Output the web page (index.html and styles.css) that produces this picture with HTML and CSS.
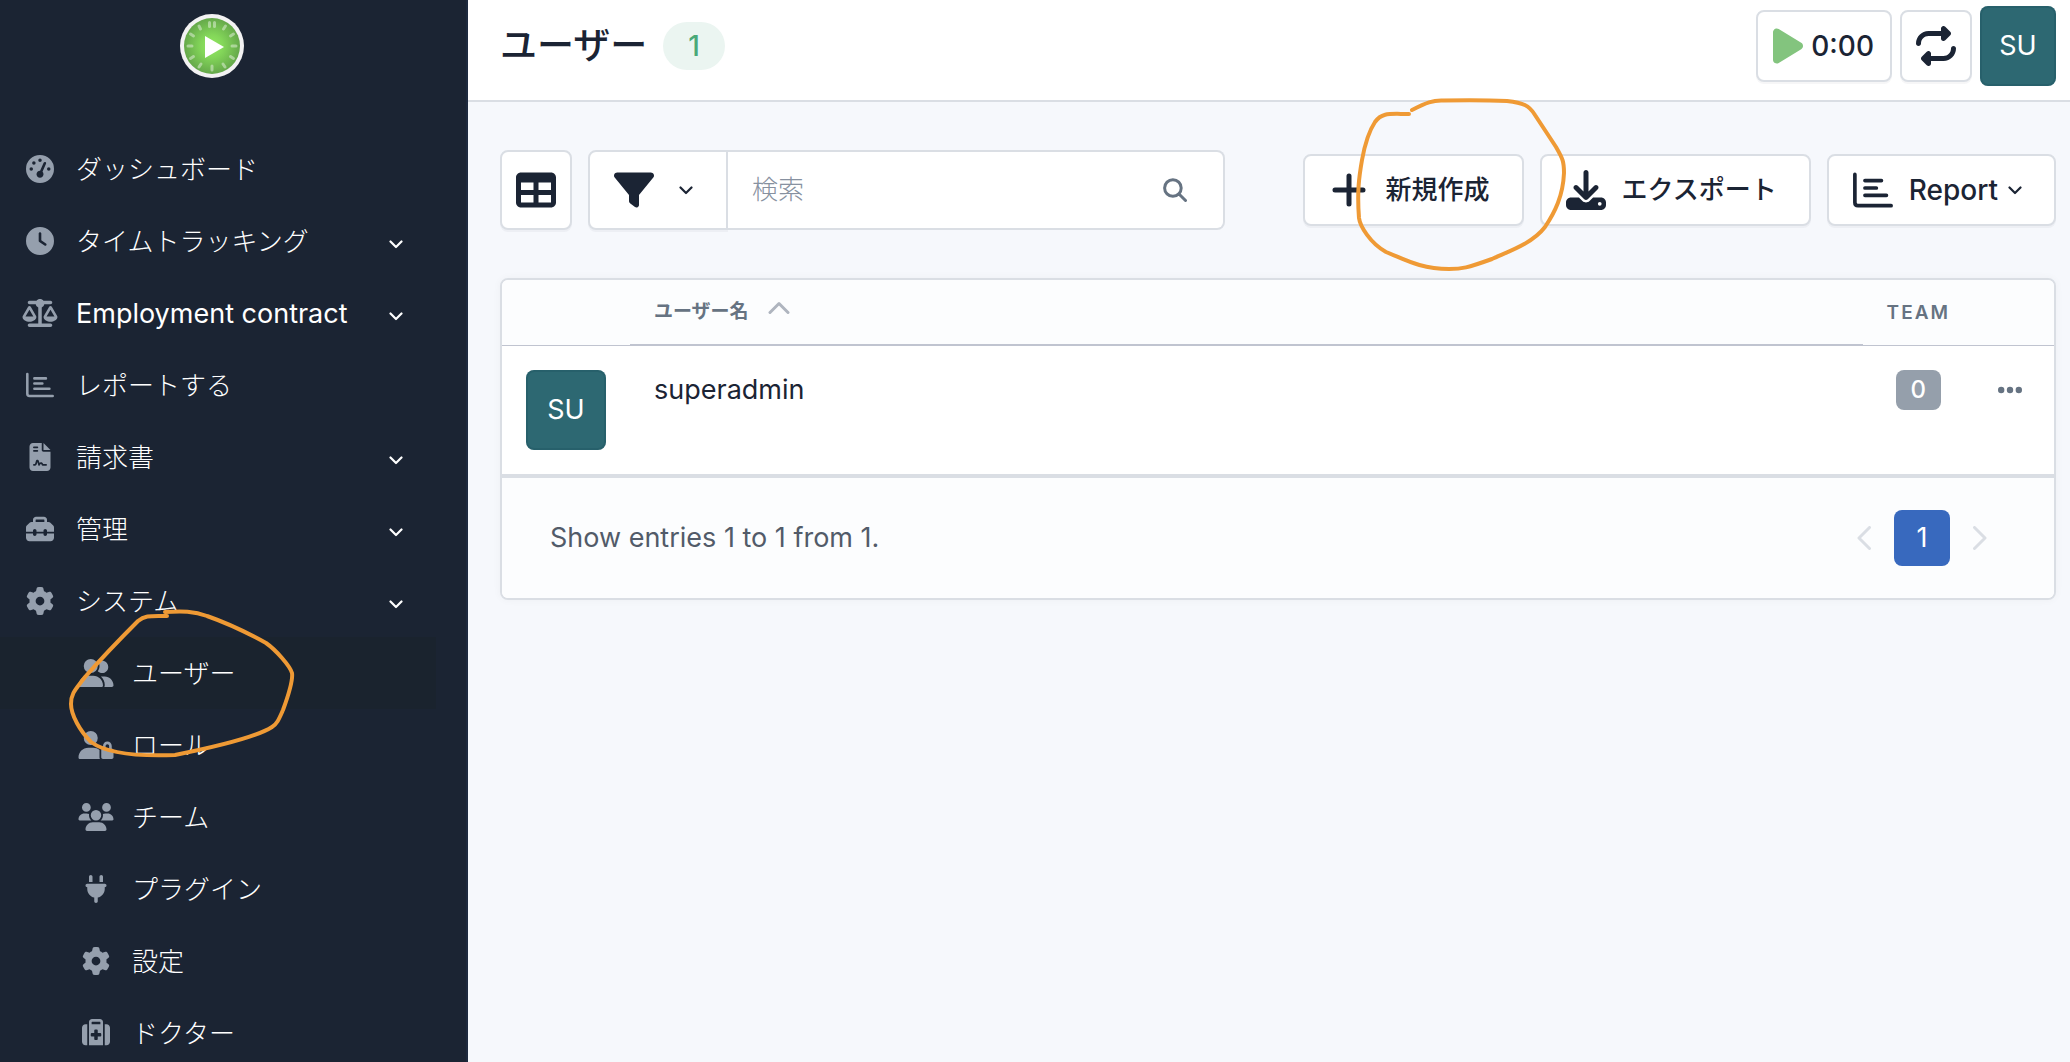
FILE: index.html
```html
<!DOCTYPE html>
<html lang="ja">
<head>
    <meta charset="UTF-8">
    <meta name="viewport" content="width=device-width, initial-scale=1">
    <title>ユーザー</title>
    <link rel="stylesheet" href="styles.css">
</head>
<body>
    <!-- shared icon shapes -->
    <svg class="sprite" aria-hidden="true">
        <symbol id="chevron" viewBox="0 0 14 9"><path d="M1.5 1.5 7 7l5.5-5.5" fill="none" stroke="currentColor" stroke-width="2.2" stroke-linecap="round" stroke-linejoin="round"/></symbol>
        <symbol id="gear" viewBox="0 0 512 512"><path d="M495.9 166.6c3.2 8.7 .5 18.4-6.4 24.6l-43.3 39.4c1.1 8.3 1.7 16.8 1.7 25.4s-.6 17.1-1.7 25.4l43.3 39.4c6.9 6.2 9.6 15.9 6.4 24.6c-4.4 11.9-9.7 23.3-15.8 34.3l-4.7 8.1c-6.6 11-14 21.4-22.1 31.2c-5.9 7.2-15.7 9.6-24.5 6.8l-55.7-17.7c-13.4 10.3-28.2 18.9-44 25.4l-12.5 57.1c-2 9.1-9 16.3-18.2 17.8c-13.8 2.3-28 3.5-42.5 3.5s-28.7-1.2-42.5-3.5c-9.2-1.5-16.2-8.7-18.2-17.8l-12.5-57.1c-15.8-6.5-30.6-15.1-44-25.4L83.1 425.9c-8.8 2.8-18.6 .3-24.5-6.8c-8.1-9.8-15.5-20.2-22.1-31.2l-4.7-8.1c-6.1-11-11.4-22.4-15.8-34.3c-3.2-8.7-.5-18.4 6.4-24.6l43.3-39.4C64.6 273.1 64 264.6 64 256s.6-17.1 1.7-25.4L22.4 191.2c-6.9-6.2-9.6-15.9-6.4-24.6c4.4-11.9 9.7-23.3 15.8-34.3l4.7-8.1c6.6-11 14-21.4 22.1-31.2c5.9-7.2 15.7-9.6 24.5-6.8l55.7 17.7c13.4-10.3 28.2-18.9 44-25.4l12.5-57.1c2-9.1 9-16.3 18.2-17.8C227.3 1.2 241.5 0 256 0s28.7 1.2 42.5 3.5c9.2 1.5 16.2 8.7 18.2 17.8l12.5 57.1c15.8 6.5 30.6 15.1 44 25.4l55.7-17.7c8.8-2.8 18.6-.3 24.5 6.8c8.1 9.8 15.5 20.2 22.1 31.2l4.7 8.1c6.1 11 11.4 22.4 15.8 34.3zM256 336a80 80 0 1 0 0-160 80 80 0 1 0 0 160z"/></symbol>
        <symbol id="report" viewBox="0 0 512 512"><path d="M24 56V417Q24 457 64 457H488M153 135H364M153 230H299M153 324H428" fill="none" stroke="currentColor" stroke-width="47" stroke-linecap="round"/></symbol>
    </svg>

    <aside class="sidebar">
        <a class="brand" href="#" aria-label="ダッシュボード">
            <svg viewBox="0 0 64 64" width="64" height="64">
                <defs>
                    <radialGradient id="dial">
                        <stop offset="0" stop-color="#93e861"/>
                        <stop offset="0.4" stop-color="#83d659"/>
                        <stop offset="1" stop-color="#65a84a"/>
                    </radialGradient>
                </defs>
                <circle cx="32" cy="32" r="32" fill="#f3f2f3"/>
                <circle cx="32" cy="32" r="28" fill="url(#dial)"/>
                <g stroke="#fff" stroke-opacity="0.42" stroke-width="3" stroke-linecap="round">
                    <path d="M29.500 8.500V12.500M34.500 8.500V12.500M32 52V56M8 32h4M52 32h4"/>
                    <path d="M43.500 15l2-3M50.500 22l3-2M50.500 42.500l3 2M43 50l2 3M21 50l-2 3M13.500 42.500l-3 2M13.500 22l-3-2M20.500 15l-1.500-3"/>
                </g>
                <path d="M25 22v22l19-11z" fill="#fff"/>
            </svg>
        </a>

        <nav>
            <ul class="menu">
                <li><a class="menu-link" href="#">
                    <svg class="menu-icon" viewBox="0 0 512 512"><path d="M0 256a256 256 0 1 1 512 0A256 256 0 1 1 0 256zM288 96a32 32 0 1 0 -64 0 32 32 0 1 0 64 0zM256 416c35.3 0 64-28.7 64-64c0-17.4-6.9-33.1-18.1-44.6L366 161.7c5.3-12.1-.2-26.3-12.3-31.6s-26.3 .2-31.600 12.300L257.9 288c-.6 0-1.300 0-1.900 0c-35.300 0-64 28.700-64 64s28.700 64 64 64zM176 144a32 32 0 1 0 -64 0 32 32 0 1 0 64 0zM96 288a32 32 0 1 0 0-64 32 32 0 1 0 0 64zm352-32a32 32 0 1 0 -64 0 32 32 0 1 0 64 0z"/></svg>
                    <span>ダッシュボード</span>
                </a></li>
                <li><a class="menu-link" href="#">
                    <svg class="menu-icon" viewBox="0 0 512 512"><path d="M256 0a256 256 0 1 1 0 512A256 256 0 1 1 256 0zM232 120V256c0 8 4 15.5 10.7 20l96 64c11 7.400 25.900 4.400 33.300-6.700s4.400-25.900-6.700-33.300L280 243.200V120c0-13.300-10.700-24-24-24s-24 10.700-24 24z"/></svg>
                    <span>タイムトラッキング</span>
                    <svg class="chevron"><use href="#chevron"/></svg>
                </a></li>
                <li><a class="menu-link" href="#">
                    <svg class="menu-icon" viewBox="0 0 640 512"><path d="M384 32H512c17.7 0 32 14.3 32 32s-14.3 32-32 32H398.4c-5.2 25.8-22.9 47.1-46.4 57.3V448H512c17.7 0 32 14.3 32 32s-14.3 32-32 32H320 128c-17.7 0-32-14.3-32-32s14.3-32 32-32H288V153.3c-23.5-10.3-41.2-31.6-46.4-57.3H128c-17.7 0-32-14.3-32-32s14.3-32 32-32H256c14.6-19.4 37.8-32 64-32s49.4 12.6 64 32zm55.6 288H584.4L512 195.8 439.6 320zM512 416c-62.9 0-115.2-34-126-78.9c-2.6-11 1-22.3 6.7-32.1l95.2-163.2c5-8.6 14.2-13.8 24.1-13.8s19.1 5.3 24.1 13.8l95.2 163.2c5.7 9.8 9.3 21.1 6.7 32.1C627.2 382 574.9 416 512 416zM126.8 195.8L54.4 320H199.3L126.8 195.8zM.9 337.1c-2.6-11 1-22.3 6.7-32.1l95.2-163.2c5-8.6 14.2-13.8 24.1-13.8s19.1 5.3 24.1 13.8l95.2 163.2c5.7 9.8 9.3 21.1 6.700 32.1C242 382 189.700 416 126.800 416S11.700 382 .9 337.100z"/></svg>
                    <span class="latin">Employment contract</span>
                    <svg class="chevron"><use href="#chevron"/></svg>
                </a></li>
                <li><a class="menu-link" href="#">
                    <svg class="menu-icon"><use href="#report"/></svg>
                    <span>レポートする</span>
                </a></li>
                <li><a class="menu-link" href="#">
                    <svg class="menu-icon" viewBox="0 0 384 512"><path d="M64 0C28.7 0 0 28.7 0 64V448c0 35.3 28.7 64 64 64H320c35.3 0 64-28.7 64-64V160H256c-17.7 0-32-14.3-32-32V0H64zM256 0V128H384L256 0zM80 64h64c8.8 0 16 7.2 16 16s-7.2 16-16 16H80c-8.8 0-16-7.2-16-16s7.2-16 16-16zm0 64h64c8.8 0 16 7.2 16 16s-7.2 16-16 16H80c-8.8 0-16-7.2-16-16s7.2-16 16-16zm54.2 253.8c-6.1 20.3-24.8 34.2-46 34.2H80c-8.8 0-16-7.2-16-16s7.2-16 16-16h8.2c7.1 0 13.3-4.6 15.3-11.4l14.9-49.5c3.4-11.3 13.8-19.1 25.6-19.1s22.2 7.7 25.6 19.1l11.6 38.6c7.4-6.2 16.8-9.7 26.8-9.7c15.9 0 30.4 9 37.5 23.2l4.4 8.8H304c8.8 0 16 7.2 16 16s-7.2 16-16 16H240c-6.1 0-11.6-3.4-14.3-8.8l-8.8-17.7c-1.7-3.4-5.1-5.5-8.8-5.5s-7.2 2.1-8.8 5.5l-8.8 17.7c-2.9 5.9-9.2 9.4-15.7 8.8s-12.1-5.1-13.9-11.3L144 349l-9.8 32.8z"/></svg>
                    <span>請求書</span>
                    <svg class="chevron"><use href="#chevron"/></svg>
                </a></li>
                <li><a class="menu-link" href="#">
                    <svg class="menu-icon" viewBox="0 0 512 512"><path d="M176 88v40H336V88c0-4.4-3.6-8-8-8H184c-4.4 0-8 3.6-8 8zm-48 40V88c0-30.9 25.1-56 56-56H328c30.9 0 56 25.1 56 56v40h28.1c12.7 0 24.9 5.1 33.9 14.1l51.9 51.9c9 9 14.1 21.2 14.1 33.9V304H384V288c0-17.7-14.3-32-32-32s-32 14.3-32 32v16H192V288c0-17.7-14.3-32-32-32s-32 14.3-32 32v16H0V227.9c0-12.7 5.1-24.9 14.1-33.9l51.9-51.9c9-9 21.2-14.1 33.9-14.1H128zM0 416V336H128v16c0 17.7 14.3 32 32 32s32-14.3 32-32V336H320v16c0 17.7 14.3 32 32 32s32-14.3 32-32V336H512v80c0 35.3-28.7 64-64 64H64c-35.3 0-64-28.700-64-64z"/></svg>
                    <span>管理</span>
                    <svg class="chevron"><use href="#chevron"/></svg>
                </a></li>
                <li>
                    <a class="menu-link" href="#">
                        <svg class="menu-icon"><use href="#gear"/></svg>
                        <span>システム</span>
                        <svg class="chevron"><use href="#chevron"/></svg>
                    </a>
                    <ul class="submenu">
                        <li class="active">
                            <a class="menu-link" href="#" aria-current="page">
                                <svg class="menu-icon" viewBox="0 0 640 512"><path d="M96 128a128 128 0 1 1 256 0A128 128 0 1 1 96 128zM0 482.3C0 383.8 79.8 304 178.3 304h91.4C368.2 304 448 383.8 448 482.3c0 16.4-13.3 29.7-29.7 29.7H29.7C13.3 512 0 498.7 0 482.3zM609.3 512H471.4c5.4-9.4 8.6-20.3 8.6-32v-8c0-60.7-27.1-115.2-69.8-151.8c2.4-.1 4.7-.2 7.1-.2h61.4C567.8 320 640 392.2 640 481.3c0 17-13.8 30.7-30.7 30.7zM432 256c-31 0-59-12.6-79.3-32.9C372.4 196.5 384 163.6 384 128c0-26.8-6.6-52.1-18.3-74.3C384.3 40.1 407.2 32 432 32c61.9 0 112 50.1 112 112s-50.1 112-112 112z"/></svg>
                                <span>ユーザー</span>
                            </a>
                            <svg class="scribble scribble-menu" viewBox="66 605 232 155" aria-hidden="true"><path d="M165 612C182 611 194 611 207 616C227 623 248 633 266 643C276 650 290 666 292 673C293 679 291 688 283 710C279 719 277 724 272 727C255 738 215 747 175 755C150 756 110 756 91 742C80 731 71 715 71 704C71 693 76 689 85 677C100 660 120 639 138 621C145 615 151 616 167 616"/></svg>
                        </li>
                        <li><a class="menu-link" href="#">
                            <svg class="menu-icon" viewBox="0 0 640 512"><path d="M224 256A128 128 0 1 0 224 0a128 128 0 1 0 0 256zm-45.7 48C79.8 304 0 383.8 0 482.3C0 498.7 13.3 512 29.7 512H392.6c-5.4-9.4-8.6-20.3-8.6-32V352c0-2.1 .1-4.2 .3-6.3c-31-26-71-41.7-114.6-41.7H178.3zM528 240c17.7 0 32 14.3 32 32v48H496V272c0-17.7 14.3-32 32-32zm-80 32v48c-17.7 0-32 14.3-32 32V480c0 17.7 14.3 32 32 32H608c17.7 0 32-14.3 32-32V352c0-17.7-14.3-32-32-32V272c0-44.2-35.8-80-80-80s-80 35.8-80 80z"/></svg>
                            <span>ロール</span>
                        </a></li>
                        <li><a class="menu-link" href="#">
                            <svg class="menu-icon" viewBox="0 0 640 512"><path d="M144 0a80 80 0 1 1 0 160A80 80 0 1 1 144 0zM512 0a80 80 0 1 1 0 160A80 80 0 1 1 512 0zM0 298.7C0 239.8 47.8 192 106.7 192h42.7c15.9 0 31 3.5 44.6 9.7c-1.3 7.2-1.9 14.7-1.9 22.3c0 38.2 16.8 72.5 43.3 96c-.2 0-.4 0-.7 0H21.3C9.6 320 0 310.4 0 298.7zM405.3 320c-.2 0-.4 0-.7 0c26.6-23.5 43.3-57.8 43.3-96c0-7.6-.7-15-1.9-22.3c13.6-6.3 28.7-9.7 44.6-9.7h42.7C592.2 192 640 239.8 640 298.7c0 11.8-9.6 21.3-21.3 21.3H405.3zM224 224a96 96 0 1 1 192 0 96 96 0 1 1 -192 0zM128 485.3C128 411.7 187.7 352 261.3 352H378.7C452.3 352 512 411.7 512 485.3c0 14.7-11.9 26.7-26.7 26.7H154.7c-14.7 0-26.7-11.9-26.7-26.7z"/></svg>
                            <span>チーム</span>
                        </a></li>
                        <li><a class="menu-link" href="#">
                            <svg class="menu-icon" viewBox="0 0 384 512"><path d="M96 0C78.3 0 64 14.3 64 32v96h64V32c0-17.7-14.3-32-32-32zM288 0c-17.7 0-32 14.3-32 32v96h64V32c0-17.7-14.3-32-32-32zM32 160c-17.7 0-32 14.3-32 32s14.3 32 32 32v32c0 77.4 55 142 128 156.8V480c0 17.7 14.3 32 32 32s32-14.3 32-32V412.8C297 398 352 333.4 352 256V224c17.7 0 32-14.3 32-32s-14.3-32-32-32H32z"/></svg>
                            <span>プラグイン</span>
                        </a></li>
                        <li><a class="menu-link" href="#">
                            <svg class="menu-icon"><use href="#gear"/></svg>
                            <span>設定</span>
                        </a></li>
                        <li><a class="menu-link" href="#">
                            <svg class="menu-icon" viewBox="0 0 512 512"><path d="M184 48H328c4.4 0 8 3.6 8 8V96H176V56c0-4.4 3.6-8 8-8zm-56 8V96v32V480H384V128 96 56c0-30.9-25.1-56-56-56H184c-30.9 0-56 25.1-56 56zM96 96H64C28.7 96 0 124.7 0 160V416c0 35.3 28.7 64 64 64H96V96zM416 480h32c35.3 0 64-28.7 64-64V160c0-35.3-28.7-64-64-64H416V480zM224 208c0-8.8 7.2-16 16-16h32c8.8 0 16 7.2 16 16v48h48c8.8 0 16 7.2 16 16v32c0 8.8-7.2 16-16 16H288v48c0 8.8-7.2 16-16 16H240c-8.8 0-16-7.2-16-16V320H176c-8.8 0-16-7.2-16-16V272c0-8.8 7.2-16 16-16h48V208z"/></svg>
                            <span>ドクター</span>
                        </a></li>
                    </ul>
                </li>
            </ul>
        </nav>
    </aside>

    <div class="page">
        <header class="page-header">
            <h1>ユーザー</h1>
            <span class="count">1</span>
            <div class="header-actions">
                <button type="button" class="btn btn-timer">
                    <svg class="play" viewBox="0 0 384 512"><path d="M73 39c-14.8-9.1-33.4-9.4-48.5-.9S0 62.6 0 80V432c0 17.4 9.4 33.4 24.5 41.9s33.7 8.1 48.5-.9L361 297c14.3-8.7 23-24.2 23-41s-8.7-32.2-23-41L73 39z"/></svg>
                    <span class="latin">0:00</span>
                </button>
                <button type="button" class="btn btn-square" aria-label="Restart">
                    <svg class="btn-icon" viewBox="0 0 512 512"><path d="M0 224c0 17.7 14.3 32 32 32s32-14.3 32-32c0-53 43-96 96-96H320v32c0 12.9 7.8 24.6 19.8 29.6s25.7 2.2 34.9-6.9l64-64c12.5-12.5 12.5-32.8 0-45.3l-64-64c-9.2-9.2-22.9-11.9-34.9-6.9S320 19.1 320 32V64H160C71.6 64 0 135.6 0 224zm512 64c0-17.7-14.3-32-32-32s-32 14.3-32 32c0 53-43 96-96 96H192V352c0-12.9-7.8-24.6-19.8-29.6s-25.7-2.2-34.9 6.9l-64 64c-12.5 12.5-12.5 32.8 0 45.3l64 64c9.2 9.2 22.9 11.9 34.9 6.9s19.8-16.6 19.8-29.6V448H352c88.4 0 160-71.6 160-160z"/></svg>
                </button>
                <a class="avatar avatar-header" href="#">SU</a>
            </div>
        </header>

        <main>
            <div class="toolbar">
                <div class="toolbar-search">
                    <button type="button" class="btn btn-square btn-tall" aria-label="Columns">
                        <svg class="btn-icon" viewBox="0 0 512 512"><path d="M64 256V160H224v96H64zm0 64H224v96H64V320zm224 96V320H448v96H288zM448 256H288V160H448v96zM64 32C28.7 32 0 60.7 0 96V416c0 35.3 28.7 64 64 64H448c35.3 0 64-28.7 64-64V96c0-35.3-28.7-64-64-64H64z"/></svg>
                    </button>
                    <form class="search">
                        <button type="button" class="btn btn-tall btn-filter" aria-label="Filter">
                            <svg class="btn-icon" viewBox="0 0 512 512"><path d="M3.9 54.9C10.5 40.9 24.5 32 40 32H472c15.5 0 29.5 8.9 36.1 22.9s4.6 30.5-5.2 42.5L320 320.9V448c0 12.1-6.8 23.2-17.7 28.6s-23.8 4.3-33.5-3l-64-48c-8.1-6-12.8-15.5-12.8-25.6V320.9L9 97.3C-.7 85.4-2.8 68.8 3.9 54.9z"/></svg>
                            <svg class="chevron"><use href="#chevron"/></svg>
                        </button>
                        <div class="search-field">
                            <input type="text" placeholder="検索" aria-label="検索">
                            <button type="submit" aria-label="Search">
                                <svg viewBox="0 0 24 24" width="24" height="24"><path d="M16.500 16.500 22.500 22.500M18.200 10A8.300 8.300 0 1 1 1.600 10A8.300 8.300 0 0 1 18.200 10Z" fill="none" stroke="currentColor" stroke-width="3" stroke-linecap="round"/></svg>
                            </button>
                        </div>
                    </form>
                </div>
                <div class="toolbar-actions">
                    <div class="create">
                        <a class="btn" href="#">
                            <svg class="btn-icon" viewBox="0 0 40 40"><path d="M20 6V34M6 20H34" fill="none" stroke="currentColor" stroke-width="5" stroke-linecap="round"/></svg>
                            <span>新規作成</span>
                        </a>
                        <svg class="scribble scribble-create" viewBox="1354 94 216 180" aria-hidden="true"><path d="M1413 110C1427 103 1434 100 1444 100.500C1470 100 1487 100 1508 101C1524 103 1530 105 1536 115L1557 147C1564 159 1565 162 1565 173C1564 196 1556 212 1546 227C1533 244 1508 252 1493 259C1468 268 1463 269 1450 269C1421 269 1405 259 1387 252C1371 243 1361 226 1360 218C1358 192 1360 177 1363 160C1367 138 1372 128 1376 122C1383 112 1391 114 1410 114"/></svg>
                    </div>
                    <a class="btn" href="#">
                        <svg class="btn-icon" viewBox="0 0 512 512"><path d="M288 32c0-17.7-14.3-32-32-32s-32 14.3-32 32V274.7l-73.4-73.4c-12.5-12.5-32.8-12.5-45.3 0s-12.5 32.8 0 45.3l128 128c12.5 12.5 32.8 12.5 45.3 0l128-128c12.5-12.5 12.5-32.8 0-45.3s-32.8-12.5-45.3 0L288 274.7V32zM64 352c-35.3 0-64 28.7-64 64v32c0 35.3 28.7 64 64 64H448c35.3 0 64-28.7 64-64V416c0-35.3-28.7-64-64-64H346.5l-45.3 45.3c-25 25-65.500 25-90.500 0L165.500 352H64zm368 56a24 24 0 1 1 0 48 24 24 0 1 1 0-48z"/></svg>
                        <span>エクスポート</span>
                    </a>
                    <button type="button" class="btn">
                        <svg class="btn-icon"><use href="#report"/></svg>
                        <span class="latin with-chevron">Report <svg class="chevron"><use href="#chevron"/></svg></span>
                    </button>
                </div>
            </div>

            <section class="card">
                <table>
                    <thead>
                        <tr>
                            <th class="col-avatar"></th>
                            <th class="col-name sorted" aria-sort="ascending">
                                <a href="#">ユーザー名
                                    <svg viewBox="0 0 22 14" width="22" height="14"><path d="M2 11.500 11 2.500l9 9" fill="none" stroke="currentColor" stroke-width="3" stroke-linecap="round" stroke-linejoin="round"/></svg>
                                </a>
                            </th>
                            <th class="col-team">TEAM</th>
                            <th class="col-actions"></th>
                        </tr>
                    </thead>
                    <tbody>
                        <tr>
                            <td class="col-avatar"><span class="avatar">SU</span></td>
                            <td class="col-name">superadmin</td>
                            <td class="col-team"><span class="badge">0</span></td>
                            <td class="col-actions">
                                <button type="button" class="more" aria-label="Actions">
                                    <svg viewBox="0 0 24 8" width="24" height="8"><circle cx="3.200" cy="4" r="3.200"/><circle cx="12" cy="4" r="3.200"/><circle cx="20.800" cy="4" r="3.200"/></svg>
                                </button>
                            </td>
                        </tr>
                    </tbody>
                </table>
                <footer class="card-footer">
                    <p>Show entries 1 to 1 from 1.</p>
                    <nav class="pagination" aria-label="Pages">
                        <button type="button" disabled aria-label="Previous"><svg viewBox="0 0 14 24" width="14" height="24"><path d="M12.500 1.500 2 12l10.500 10.500"/></svg></button>
                        <a href="#" aria-current="page">1</a>
                        <button type="button" disabled aria-label="Next"><svg viewBox="0 0 14 24" width="14" height="24"><path d="M1.500 1.500 12 12 1.500 22.500"/></svg></button>
                    </nav>
                </footer>
            </section>
        </main>
    </div>
</body>
</html>
```
FILE: styles.css
```css
*, *::before, *::after {
    box-sizing: border-box;
}

body {
    display: flex;
    margin: 0;
    min-height: 100vh;
    background: #f6f8fc;
    color: #1b2434;
    font-family: Inter, "Noto Sans CJK JP", sans-serif;
    font-size: 26px;
    line-height: 40px;
}
a {
    color: inherit;
    text-decoration: none;
}
button, input {
    font: inherit;
    color: inherit;
}
button {
    cursor: pointer;
}
svg {
    display: block;
    flex: none;
    fill: currentColor;
}
.sprite {
    position: absolute;
    width: 0;
    height: 0;
}
.chevron {
    width: 14px;
    height: 9px;
}

/* sidebar */
.sidebar {
    position: sticky;
    top: 0;
    flex: 0 0 468px;
    height: 100vh;
    overflow: hidden;
    background: #1b2433;
    border-right: 2px solid #1e2a3f;
    color: #fff;
}
.brand {
    display: flex;
    justify-content: center;
    width: 424px;
    padding: 14px 0 55px;
}
.menu, .submenu {
    margin: 0;
    padding: 0;
    list-style: none;
}
.menu-link {
    display: flex;
    align-items: center;
    gap: 18px;
    height: 72px;
    padding: 0 63px 0 22px;
    font-weight: 300;
}
.menu-link span {
    padding-top: 2px;
}
.menu-link .latin {
    font-size: 27px;
    font-weight: 400;
}
.submenu .menu-link {
    padding-left: 78px;
}
.menu-icon {
    width: 36px;
    height: 28px;
    color: #959fad;
}
.menu-link .chevron {
    margin: 6px 0 0 auto;
}
.active {
    position: relative;
    width: 436px;
    background: #1a232e;
}

/* hand-drawn highlights */
.scribble {
    position: absolute;
    z-index: 1;
    fill: none;
    stroke: #ef9a35;
    stroke-width: 4px;
    stroke-linecap: round;
    pointer-events: none;
}
.scribble-menu {
    top: -32px;
    left: 66px;
    width: 232px;
    height: 155px;
}
.scribble-create {
    top: -60px;
    left: 50px;
    width: 216px;
    height: 180px;
}

/* top bar */
.page {
    flex: 1;
    min-width: 0;
}
.page-header {
    display: flex;
    align-items: center;
    height: 102px;
    padding: 0 14px 8px 32px;
    background: #fff;
    border-bottom: 2px solid #dadee4;
}
h1 {
    margin: 0;
    font-size: 37px;
    font-weight: 500;
}
.count {
    margin-left: 16px;
    padding: 4px 25px;
    border-radius: 24px;
    background: #ebf5f1;
    color: #4aa978;
    font-size: 28px;
    font-weight: 500;
}
.header-actions {
    display: flex;
    align-items: center;
    gap: 8px;
    margin-left: auto;
}

.btn {
    display: flex;
    align-items: center;
    gap: 16px;
    height: 72px;
    padding: 0 32px 0 24px;
    border: 2px solid #dadee4;
    border-radius: 8px;
    background: #fff;
    box-shadow: 0 2px 0 rgba(27, 36, 52, 0.04);
    font-weight: 500;
    white-space: nowrap;
}
.btn .latin {
    font-size: 28px;
}
.btn-icon {
    width: 40px;
    height: 40px;
}
.btn-square {
    flex: none;
    justify-content: center;
    width: 72px;
    padding: 0;
}
.btn-tall {
    height: 80px;
}
.btn-timer {
    gap: 8px;
    padding: 0 16px 0 15px;
}
.play {
    width: 30px;
    height: 40px;
    color: #83c47e;
}
.avatar {
    display: flex;
    align-items: center;
    justify-content: center;
    width: 80px;
    height: 80px;
    border-radius: 8px;
    background: #2d6872;
    box-shadow: inset 0 0 0 2px rgba(27, 80, 92, 0.3);
    color: #fff;
    font-size: 27px;
}
.avatar-header {
    width: 76px;
}

/* toolbar */
main {
    padding: 48px 14px 48px 32px;
}
.toolbar {
    display: flex;
    align-items: center;
    justify-content: space-between;
    gap: 32px;
}
.toolbar-search {
    display: flex;
    flex: 0 1 725px;
    gap: 16px;
}
.toolbar-actions {
    display: flex;
    gap: 16px;
}
.create {
    position: relative;
}
.with-chevron {
    display: flex;
    align-items: center;
    gap: 10px;
}
.search {
    display: flex;
    flex: 1;
    min-width: 0;
    margin: 0;
}
.btn-filter {
    gap: 25px;
    padding: 0 33px 0 24px;
    border-radius: 8px 0 0 8px;
}
.search-field {
    display: flex;
    flex: 1;
    align-items: center;
    min-width: 0;
    padding: 0 24px;
    border: 2px solid #dadee4;
    border-left: 0;
    border-radius: 0 8px 8px 0;
    background: #fff;
}
.search-field input {
    flex: 1;
    min-width: 0;
    padding: 0;
    border: 0;
    outline: 0;
    background: none;
    font-weight: 300;
}
.search-field input::placeholder {
    color: #8791a0;
}
.search-field button {
    padding: 0 12px;
    border: 0;
    background: none;
    color: #667382;
}

/* data table */
.card {
    margin-top: 48px;
    border: 2px solid #dadee4;
    border-radius: 8px;
    background: #fff;
    box-shadow: 0 0 8px rgba(27, 36, 52, 0.04);
    overflow: hidden;
}
table {
    width: 100%;
    border-collapse: separate;
    border-spacing: 0;
    font-size: 27px;
}
th {
    height: 66px;
    padding: 0 24px;
    border-bottom: 1px solid #c0c4d0;
    background: #fcfdfe;
    color: #667382;
    font-size: 19px;
    font-weight: 600;
    text-align: left;
}
th.sorted {
    border-bottom-width: 2px;
}
.sorted a {
    display: flex;
    align-items: center;
    gap: 19px;
}
.sorted svg {
    margin-bottom: 8px;
    color: #afb5bf;
}
td {
    padding: 24px;
    border-bottom: 4px solid #dadee4;
    vertical-align: top;
}
.col-avatar {
    width: 128px;
}
.col-team {
    width: 108px;
    text-align: center;
}
th.col-team {
    letter-spacing: 2px;
}
.col-actions {
    width: 80px;
}
.badge {
    display: block;
    width: 45px;
    margin: 0 auto;
    border-radius: 8px;
    background: #959fab;
    color: #fff;
    font-size: 24px;
    font-weight: 500;
}
.more {
    display: flex;
    align-items: center;
    height: 40px;
    padding: 0;
    border: 0;
    background: none;
    color: #667382;
}
.card-footer {
    display: flex;
    align-items: center;
    justify-content: space-between;
    height: 120px;
    padding: 0 67px 0 48px;
    background: #fcfdfe;
    color: #525b69;
    font-size: 27px;
}
.card-footer p {
    margin: 0;
}
.pagination {
    display: flex;
    align-items: center;
    gap: 23px;
}
.pagination a {
    width: 56px;
    border-radius: 8px;
    background: #3869be;
    color: #fff;
    line-height: 56px;
    text-align: center;
}
.pagination button {
    padding: 0;
    border: 0;
    background: none;
    color: #dadee4;
}
.pagination path {
    fill: none;
    stroke: currentColor;
    stroke-width: 3px;
    stroke-linecap: round;
    stroke-linejoin: round;
}
```
